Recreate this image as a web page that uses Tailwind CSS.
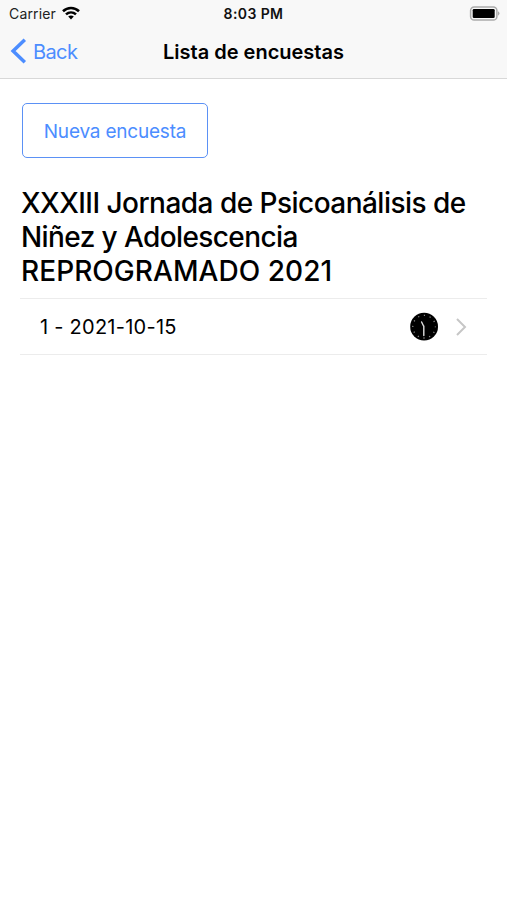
<!DOCTYPE html>
<html lang="es">
<head>
<meta charset="utf-8">
<title>Lista de encuestas</title>
<script src="https://cdn.jsdelivr.net/npm/@tailwindcss/browser@4"></script>
</head>
<body class="h-[900px] overflow-hidden bg-white font-['Inter','Liberation_Sans',sans-serif] text-black">
<header class="h-[79px] border-b border-[#d8d8d8] bg-[#f8f8f8]">
  <div class="grid h-[27px] grid-cols-[1fr_auto_1fr] items-center px-[9px] text-[14px] leading-[27px]">
    <div class="flex items-center gap-[6px]">
      <span class="tracking-[0.15px] text-[#222]">Carrier</span>
      <svg class="mt-[-2px] h-[14px] w-[18px]" viewBox="0 0 18 14" fill="none" stroke="#000" stroke-width="2.6">
        <path d="M1 5.2C5.6.9 12.4.9 17 5.2"/>
        <path d="M4 8.4c2.9-2.6 7.1-2.6 10 0"/>
        <path d="M9 13.4 6.2 10.6c1.5-1.5 4.1-1.5 5.6 0z" fill="#000" stroke="none"/>
      </svg>
    </div>
    <span class="text-[14px] font-semibold tracking-[0.4px] text-[#111]">8:03 PM</span>
    <svg class="mr-[-2px] h-[15px] w-[31px] justify-self-end" viewBox="0 0 31 15">
      <rect x="1.6" y="1" width="26.3" height="13" rx="3.6" fill="#f8f8f8" stroke="#aaa" stroke-width="1.5"/>
      <rect x="3.7" y="3" width="22" height="9" rx="1.3" fill="#000"/>
      <path d="M29 5.3q3 2.2 0 4.4z" fill="#aaa"/>
    </svg>
  </div>
  <div class="grid h-[50px] grid-cols-[1fr_auto_1fr] items-center px-[10px]">
    <div class="flex items-center gap-[6px] text-[20px] text-[#4c8dff]">
      <svg class="mt-[-2px] h-[26px] w-[17px]" viewBox="0 0 17 26" fill="none" stroke="#4c8dff" stroke-width="3.5"><path d="M14.8 1.7 3.1 13l11.7 11.3"/></svg>
      <span class="tracking-[-0.6px]">Back</span>
    </div>
    <h1 class="text-[20px] font-semibold">Lista de encuestas</h1>
  </div>
</header>
<main class="px-[20px] pt-[24px]">
  <button class="ml-[2px] h-[55px] w-[186px] rounded-[5px] border-[1.5px] border-[#5b91f5] pt-[3px] text-[19px] tracking-[-0.2px] text-[#4c8dff]">Nueva encuesta</button>
  <h2 class="mt-[28px] pl-px text-[28px] leading-[34.2px] font-medium whitespace-nowrap"><span class="tracking-[-0.53px]">XXXIII Jornada de Psicoanálisis de</span><br><span class="tracking-[-0.6px]">Niñez y Adolescencia</span><br><span class="tracking-[0.05px]">REPROGRAMADO 2021</span></h2>
  <div class="mt-[9px] flex h-[57px] items-center border-y border-[#ececec] pr-[20px] pl-[20px] text-[20px]">
    <span class="flex-1 pt-[2px] tracking-[0.25px]">1 - 2021-10-15</span>
    <svg class="mt-px mr-[17px] h-[29px] w-[29px]" viewBox="0 0 29 29" fill="none">
      <circle cx="15.1" cy="14.7" r="13.9" fill="#000"/>
      <circle cx="15.1" cy="14.7" r="11.3" stroke="#888" stroke-width="1.3" stroke-dasharray="1.2 4.717" stroke-dashoffset=".6"/>
      <path d="M14.8 14v9.5M14.8 14.5 12.6 10" stroke="#ddd" stroke-width="1.4" stroke-linecap="round"/>
    </svg>
    <svg class="mt-[2px] h-[18px] w-[12px]" viewBox="0 0 12 18" fill="none" stroke="#c6c6c6" stroke-width="2"><path d="m2 1 8 8-8 8"/></svg>
  </div>
</main>
</body>
</html>
